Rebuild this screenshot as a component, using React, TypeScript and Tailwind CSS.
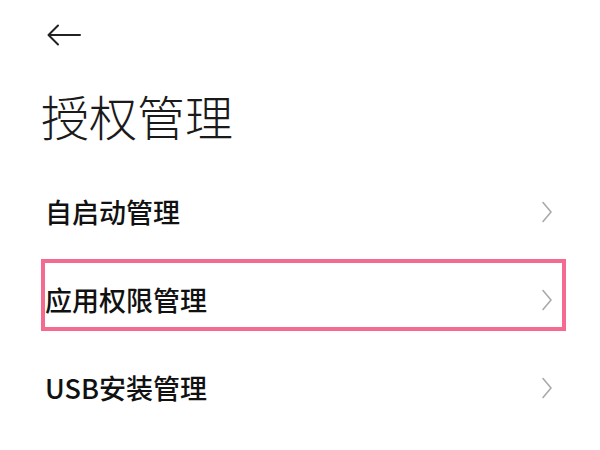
const font = { fontFamily: '"Noto Sans CJK SC", "Noto Sans", sans-serif' };

function Chevron() {
  return (
    <svg width="12" height="22" viewBox="0 0 12 22" fill="none" className="shrink-0">
      <path d="M2 1.5 L10 11 L2 20.5" stroke="#a9a9a9" strokeWidth="1.6" strokeLinecap="round" strokeLinejoin="round" />
    </svg>
  );
}

const items = ['自启动管理', '应用权限管理', 'USB安装管理'];

export default function App() {
  return (
    <div className="w-[600px] h-[450px] bg-white overflow-hidden" style={font}>
      <div className="pl-[47px] pt-[24px]">
        <svg width="34" height="22" viewBox="0 0 34 22" fill="none">
          <path d="M33 11 H2 M11 1.5 L1.5 11 L11 20.5" stroke="#222" strokeWidth="2" strokeLinecap="round" strokeLinejoin="round" />
        </svg>
      </div>
      <h1 className="pl-[41px] mt-[41px] text-[48px] leading-[56px] font-light text-[#1a1a1a]">授权管理</h1>
      <div className="relative mt-[25px]">
        {items.map((t) => (
          <div key={t} className="h-[88px] flex items-center justify-between pl-[45px] pr-[47px]">
            <span className="text-[27px] font-medium text-[#111]">{t}</span>
            <Chevron />
          </div>
        ))}
        <div className="absolute left-[41px] top-[91px] w-[525px] h-[72px] border-[4px] border-[#f46a90]" />
      </div>
    </div>
  );
}
